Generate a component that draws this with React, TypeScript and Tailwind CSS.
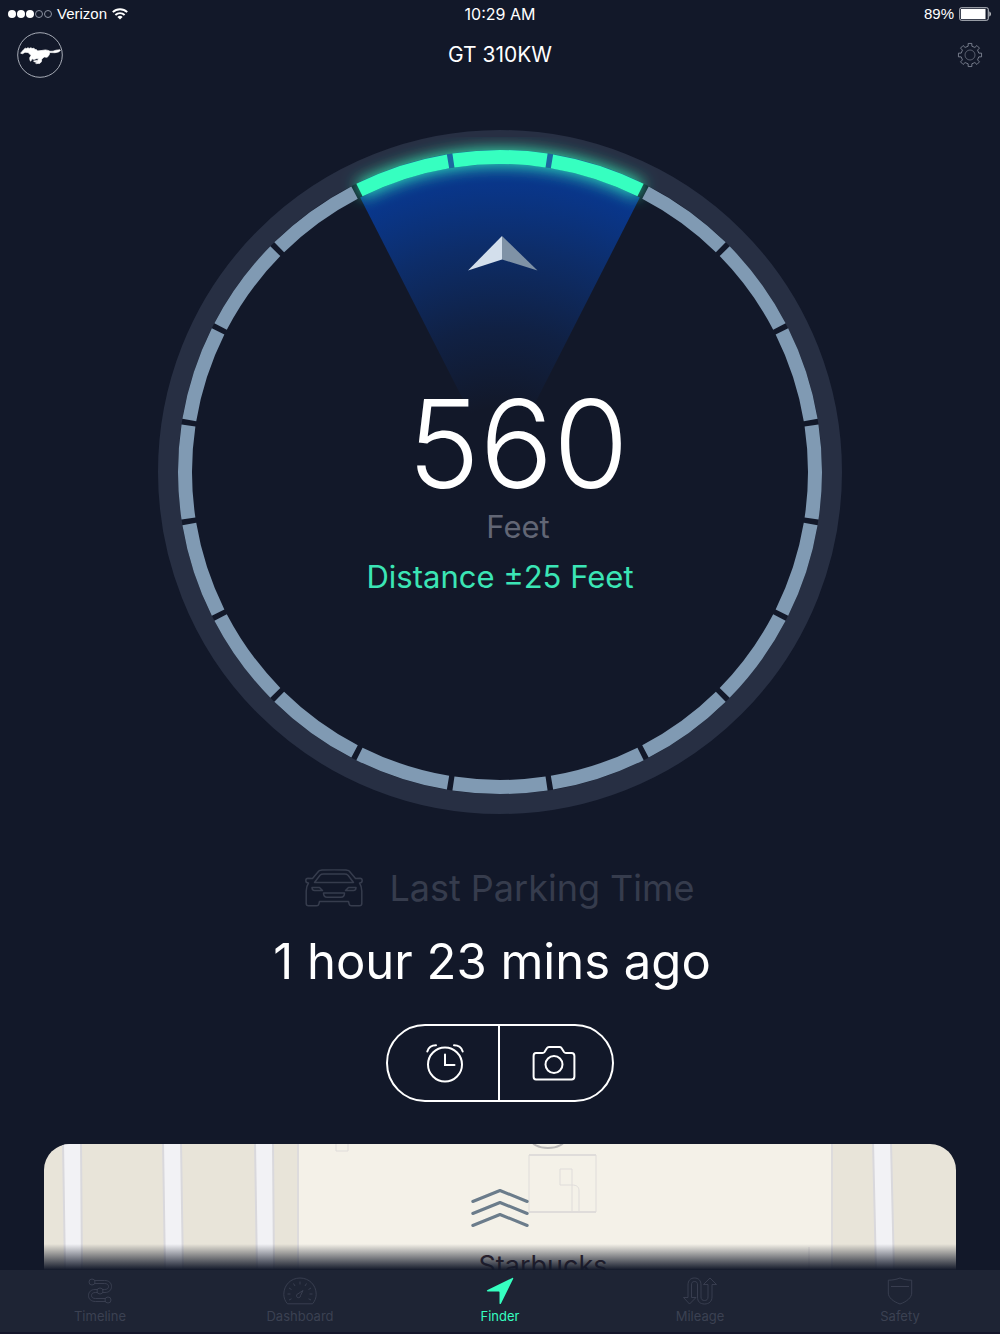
import { useState } from 'react';
import type { ReactNode } from 'react';

type IconProps = { className?: string };

const toPoint = (cx: number, cy: number, radius: number, degrees: number) => {
  const angle = (degrees * Math.PI) / 180;
  return {
    x: cx + radius * Math.sin(angle),
    y: cy - radius * Math.cos(angle),
  };
};

const SEGMENT_COUNT = 20;
const SEGMENT_ANGLE = 360 / SEGMENT_COUNT;
const CENTER = 342;
const SEGMENT_RADIUS = 315;

const arcPath = (from: number, to: number, radius: number) => {
  const start = toPoint(CENTER, CENTER, radius, from);
  const end = toPoint(CENTER, CENTER, radius, to);
  return `M${start.x} ${start.y} A${radius} ${radius} 0 0 1 ${end.x} ${end.y}`;
};

const segmentPath = (index: number) => {
  const middle = index * SEGMENT_ANGLE;
  return arcPath(middle - 8.5, middle + 8.5, SEGMENT_RADIUS);
};

const gearPath = () => {
  const points: string[] = [];
  for (let tooth = 0; tooth < 8; tooth++) {
    const middle = tooth * 45;
    [
      [9, middle - 12],
      [11.7, middle - 9],
      [11.7, middle + 9],
      [9, middle + 12],
    ].forEach(([radius, degrees]) => {
      const { x, y } = toPoint(13, 13, radius, degrees);
      points.push(`${x} ${y}`);
    });
  }
  return `M${points.join('L')}Z`;
};

const WifiIcon = () => (
  <svg viewBox="0 0 16 12" className="w-4 h-3" fill="none" stroke="white" strokeWidth="1.9">
    <path d="M0.8 4.2a10.2 10.2 0 0 1 14.4 0" />
    <path d="M3.4 7a6.5 6.5 0 0 1 9.2 0" />
    <path d="M8 11.6L5.4 9a3.7 3.7 0 0 1 5.2 0z" fill="white" stroke="none" />
  </svg>
);

const BatteryIcon = () => (
  <svg viewBox="0 0 33 14" className="w-[33px] h-[14px]">
    <rect x="0.75" y="0.75" width="28.5" height="12.5" rx="1.5" fill="none" stroke="#c4c7ce" />
    <rect x="2" y="2" width="24.5" height="10" fill="white" />
    <path d="M30.5 4.5c1.6.4 1.6 4.600 0 5z" fill="white" />
  </svg>
);

const HorseLogo = () => (
  <svg viewBox="0 0 46 46" className="w-[46px] h-[46px]">
    <circle cx="23" cy="23" r="22.3" fill="none" stroke="#b9bdc7" strokeWidth="0.9" />
    <path
      fill="white"
      stroke="white"
      strokeWidth="0.7"
      strokeLinejoin="round"
      d="M3.600 21.200L6.500 17.800 8.200 16.200 9.500 16.600 11 15.700 12.200 16.500 14 15.700 15 16.600 17 16.200 18 17.600 19.600 17.700 20.500 18.900 24 18.600 28.500 17.900 31 18.400 33 19.300 36 19.200 39 18.200 43 17.800 43.400 18.500 41.500 19.900 38 20.700 35 20.600 32.600 20.500 32.300 22.500 31 24.600 29.800 25.300 27.300 25 25.800 26 24.600 27.500 24.500 29.500 23 31.300 19.300 31.600 18.500 31 20.800 29.800 17.500 30 16.500 28.900 20.500 28.400 21.500 26.800 20 26.500 17 27.500 15 26.800 13.800 29.200 13 28.600 12.700 25.800 14 23.600 13 22.200 11 20.500 8 20.300 5.500 21.700z"
    />
  </svg>
);

const GearIcon = () => (
  <svg viewBox="0 0 26 26" className="w-[26px] h-[26px]" fill="none" stroke="#8d93a2" strokeWidth="0.8">
    <path d={gearPath()} strokeLinejoin="round" />
    <circle cx="13" cy="13" r="5" strokeOpacity="0.7" />
  </svg>
);

const CarIcon = () => (
  <svg viewBox="0 0 58 38" className="w-[58px] h-[38px]" fill="none" stroke="currentColor" strokeWidth="1.5" strokeLinejoin="round">
    <path d="M7.500 9.500L12.500 3.500C13.500 1.800 15 1.200 17 1.100 25 0.800 33 0.800 41 1.100 43 1.200 44.500 1.800 45.500 3.500L50.500 9.500 55 9.200C56.500 9.200 57.200 10 57.200 11.500 57.200 13 56.500 14 54.500 14 56.500 17 56.800 19 56.800 22V34.500C56.800 36 56 36.800 54.500 36.800H46.500C45 36.800 44.200 36 44 34.500L43.500 32.500H14.500L14 34.500C13.800 36 13 36.800 11.500 36.800H3.500C2 36.800 1.200 36 1.200 34.500V22C1.200 19 1.500 17 3.500 14 1.500 14 0.800 13 0.800 11.500 0.800 10 1.500 9.200 3 9.200z" />
    <path d="M9.500 13.500L15 6.200C16 5.200 17 5 18.500 5H39.500C41 5 42 5.200 43 6.200L48.500 13.500z" />
    <path d="M7 18.500H14.500L17.500 21.500H9.500C8 21.500 7 20.500 7 18.500zM51 18.500H43.500L40.500 21.500H48.500C50 21.500 51 20.500 51 18.500zM18.500 24H39.500C39.500 27 38.500 28.200 36 28.200H22C19.500 28.200 18.500 27 18.500 24z" />
  </svg>
);

const AlarmIcon = () => (
  <svg viewBox="0 0 40 40" className="w-10 h-10" fill="none" stroke="white" strokeWidth="2" strokeLinecap="round">
    <circle cx="20" cy="21.500" r="17" />
    <path d="M20 11.500V22H29.500" />
    <path d="M2.300 8.500C3.500 4.500 6.500 2.300 11 2.300M37.700 8.500C36.500 4.500 33.500 2.300 29 2.300" />
  </svg>
);

const CameraIcon = () => (
  <svg viewBox="0 0 44 36" className="w-11 h-9" fill="none" stroke="white" strokeWidth="2" strokeLinejoin="round">
    <path d="M4 8H10.500C11.500 8 12 7.700 12.500 7L15 3C15.400 2.300 16 2 17 2H27.500C28.500 2 29 2.300 29.500 3L32 7C32.500 7.700 33 8 34 8H39.500C41.500 8 42.400 9 42.400 11V31.500C42.400 33.500 41.500 34.400 39.500 34.400H4C2 34.400 1.600 33.500 1.600 31.500V11C1.600 9 2 8 4 8z" />
    <circle cx="22" cy="19.500" r="8.500" />
  </svg>
);

const TimelineIcon = ({ className }: IconProps) => (
  <svg viewBox="0 0 26 28" className={className} fill="none" stroke="currentColor" strokeWidth="0.9">
    <circle cx="5" cy="5" r="3" />
    <circle cx="13" cy="14" r="3" />
    <circle cx="21" cy="23" r="3" />
    <path d="M8 3.500H17.500C22 3.500 24.500 6 24.500 9.500S22 15.500 18 15.500H16M8 6.500H17.500C20 6.500 21.500 7.500 21.500 9.500S20 12.500 17.500 12.500H16" />
    <path d="M18 24.500H8.500C4 24.500 1.500 22 1.500 18.500S4 12.500 8 12.500H10M18 21.500H8.500C6 21.500 4.500 20.500 4.500 18.500S6 15.500 8.500 15.500H10" />
  </svg>
);

const DashboardIcon = ({ className }: IconProps) => (
  <svg viewBox="0 0 34 28" className={className} fill="none" stroke="currentColor" strokeWidth="0.9">
    <path d="M4.500 26.800C2 24 0.800 20.800 0.800 17.200 0.800 8 8 1 17 1S33.200 8 33.200 17.200C33.200 20.800 32 24 29.500 26.800z" />
    <path d="M17 4.500V7.500M10.500 6.500L12 9M23.500 6.500L22 9M6 11L8.500 12.500M28 11L25.500 12.500M4.500 17H7.500M29.500 17H26.500M6 23L8.500 21.800M28 23L25.500 21.800" />
    <path d="M20 13.500L17.500 18.500A2 2 0 1 1 15 16.800z" />
  </svg>
);

const FinderIcon = ({ className }: IconProps) => (
  <svg viewBox="0 0 28 28" className={className} fill="currentColor">
    <path d="M26.300 0.900C27 0.600 27.500 1.100 27.200 1.800L15 26.500C14.500 27.400 13.500 27.200 13.500 26.200V15.500C13.500 14.800 13.200 14.500 12.500 14.500H1.800C0.600 14.500 0.500 13.500 1.500 13z" />
  </svg>
);

const MileageIcon = ({ className }: IconProps) => (
  <svg viewBox="0 0 34 28" className={className} fill="none" stroke="currentColor" strokeWidth="0.9" strokeLinejoin="round">
    <path d="M5 20.500V8C5 3.500 7.500 1 11.500 1S18 3.500 18 8V20C18 22.500 19.500 23.500 21.500 23.500S25 22.500 25 20V7.500H20.500L27 1 33.500 7.500H29V20C29 24.500 26 27 21.500 27S14.500 24.500 14.500 20V8C14.500 5.500 13.500 4.500 11.500 4.500S8.500 5.500 8.500 8V20.500H13L6.500 27 0.500 20.500z" />
  </svg>
);

const SafetyIcon = ({ className }: IconProps) => (
  <svg viewBox="0 0 26 28" className={className} fill="none" stroke="currentColor" strokeWidth="0.9" strokeLinejoin="round">
    <path d="M13 1C17 2.600 21 3.200 24.700 3.200V16C24.700 20.500 20 24.500 13 27 6 24.500 1.300 20.500 1.300 16V3.200C5 3.200 9 2.600 13 1z" />
    <path d="M4 9.500H22" />
  </svg>
);

const StatusBar = () => (
  <div className="grid grid-cols-3 items-center h-7 px-2 font-['Liberation_Sans'] text-[15px]">
    <div className="flex items-center gap-[5px]">
      <div className="flex gap-px">
        {[true, true, true, false, false].map((filled, index) => (
          <span
            key={index}
            className={
              filled
                ? 'w-2 h-2 rounded-full bg-white'
                : 'w-2 h-2 rounded-full border border-[#8d93a2]'
            }
          />
        ))}
      </div>
      <span>Verizon</span>
      <WifiIcon />
    </div>
    <span className="text-center font-['Inter'] text-base">10:29 AM</span>
    <div className="flex items-center justify-end gap-[5px]">
      <span>89%</span>
      <BatteryIcon />
    </div>
  </div>
);

const Header = () => (
  <header className="flex items-center justify-between px-[17px] h-[54px]">
    <button type="button" aria-label="Vehicle">
      <HorseLogo />
    </button>
    <h1 className="text-[21px]">GT 310KW</h1>
    <button type="button" aria-label="Settings" className="w-[46px] flex justify-end">
      <GearIcon />
    </button>
  </header>
);

const Compass = () => {
  const left = toPoint(CENTER, CENTER, 308, -27);
  const right = toPoint(CENTER, CENTER, 308, 27);
  const active = [-1, 0, 1];
  return (
    <svg viewBox="0 0 684 684" className="w-full">
      <defs>
        <radialGradient id="beam" gradientUnits="userSpaceOnUse" cx={CENTER} cy={CENTER} r="322">
          <stop offset="0.2" stopColor="#0a3a91" stopOpacity="0" />
          <stop offset="0.45" stopColor="#0a3a91" stopOpacity="0.26" />
          <stop offset="0.7" stopColor="#0a3a91" stopOpacity="0.62" />
          <stop offset="0.9" stopColor="#09368a" />
          <stop offset="1" stopColor="#0d4a96" />
        </radialGradient>
        <filter id="glow" x="-20%" y="-60%" width="140%" height="220%">
          <feGaussianBlur stdDeviation="8" />
        </filter>
      </defs>
      <circle cx={CENTER} cy={CENTER} r="332" fill="none" stroke="#272f43" strokeWidth="20" />
      <path
        d={`M${CENTER} ${CENTER}L${left.x} ${left.y}A308 308 0 0 1 ${right.x} ${right.y}Z`}
        fill="url(#beam)"
      />
      <path d={arcPath(-26.5, 26.5, SEGMENT_RADIUS)} fill="none" stroke="#36ffc0" strokeWidth="14" filter="url(#glow)" />
      <path d={arcPath(-26, 26, SEGMENT_RADIUS)} fill="none" stroke="#1c68a0" strokeWidth="14" />
      {Array.from({ length: SEGMENT_COUNT }, (_, index) => index)
        .filter((index) => index > 1 && index < SEGMENT_COUNT - 1)
        .map((index) => (
          <path key={index} d={segmentPath(index)} fill="none" stroke="#809ab3" strokeWidth="14" />
        ))}
      {active.map((index) => (
        <path key={index} d={segmentPath(index)} fill="none" stroke="#36ffc0" strokeWidth="14" />
      ))}
      <path d="M344 106L310 140.500 344 129.500z" fill="#d3dfec" />
      <path d="M344 106L379.500 140.500 344 129.500z" fill="#7f92a6" />
    </svg>
  );
};

const Distance = () => (
  <section className="grid w-full max-w-[684px] mx-auto mt-12">
    <div className="col-start-1 row-start-1">
      <Compass />
    </div>
    <div className="col-start-1 row-start-1 self-center flex flex-col items-center pt-11">
      <div className="flex flex-col items-center pl-9">
        <span className="font-light text-[122px] leading-[128px]">560</span>
        <span className="text-[31px] leading-[38px] text-[#626675]">Feet</span>
      </div>
      <p className="text-[31px] leading-[62px] text-[#3be5b5]">Distance ±25 Feet</p>
    </div>
  </section>
);

const Parking = () => (
  <section className="flex flex-col items-center mt-12">
    <div className="flex items-center gap-[26px] text-[#363c4d]">
      <CarIcon />
      <h2 className="text-[36px] leading-[52px]">Last Parking Time</h2>
    </div>
    <p className="pr-4 mt-2 text-[49px] leading-[80px]">1 hour 23 mins ago</p>
    <div className="flex mt-[22px] border-2 border-white rounded-full divide-x-2 divide-white">
      <button type="button" aria-label="Set reminder" className="grid place-items-center w-28 h-[74px] pl-1">
        <AlarmIcon />
      </button>
      <button type="button" aria-label="Take photo" className="grid place-items-center w-28 h-[74px] pr-1">
        <CameraIcon />
      </button>
    </div>
  </section>
);

const MapDrawing = () => (
  <svg viewBox="0 0 912 126" preserveAspectRatio="xMidYMin slice" className="absolute inset-0 w-full h-full">
    <rect width="912" height="126" fill="#e8e4d9" />
    <g fill="#f2f2f5" stroke="#d9d8dc" strokeWidth="2">
      <path d="M19 -2L21 128H38L37 -2z" />
      <path d="M119 -2L121 128H139L137 -2z" />
      <path d="M211 -2L213 128H230L229 -2z" />
      <path d="M829 -2L832 128H850L847 -2z" />
    </g>
    <path d="M253 0H788V126H253z" fill="#f4f1e8" />
    <path d="M254 0V126M788 0V126" stroke="#dddbdc" strokeWidth="2" />
    <g fill="none" stroke="#dfdcda">
      <path d="M292 0V7H304V0M485 11H552V68H485zM516 25H528V41H516zM528 41V68M528 41C533 41 535 43 535 47V68M765 103V126" />
      <path d="M485 11H552M485 68H552" strokeWidth="2" />
      <ellipse cx="504" cy="-5" rx="17" ry="9" stroke="#bbb9b8" strokeWidth="2" />
    </g>
  </svg>
);

const MapPreview = () => (
  <section className="relative flex-1 flex flex-col items-center min-h-[126px] mx-11 mt-[42px] rounded-t-[26px] overflow-hidden">
    <MapDrawing />
    <button type="button" aria-label="Open map" className="relative mt-[44px]">
      <svg viewBox="0 0 58 40" className="w-[58px] h-10" fill="none" stroke="#6b7c8b" strokeWidth="3" strokeLinecap="round" strokeLinejoin="round">
        <path d="M1.800 13.500L29 2.500 56.200 13.500M1.800 25.500L29 14.500 56.200 25.500M1.800 37.500L29 26.500 56.200 37.500" />
      </svg>
    </button>
    <div className="relative h-0 pl-[86px]">
      <p className="mt-[22px] text-[27px] leading-8 text-[#3a2730]">Starbucks</p>
    </div>
    <div className="absolute inset-x-0 bottom-0 h-[26px] bg-linear-to-b from-[#121829]/0 to-[#121829]" />
  </section>
);

const tabs: { name: string; icon: ReactNode }[] = [
  { name: 'Timeline', icon: <TimelineIcon className="w-[26px] h-7" /> },
  { name: 'Dashboard', icon: <DashboardIcon className="w-[34px] h-7" /> },
  { name: 'Finder', icon: <FinderIcon className="w-7 h-7" /> },
  { name: 'Mileage', icon: <MileageIcon className="w-[34px] h-7" /> },
  { name: 'Safety', icon: <SafetyIcon className="w-[26px] h-7" /> },
];

const TabBar = () => {
  const [current, setCurrent] = useState('Finder');
  return (
    <nav className="grid grid-cols-5 h-16 bg-[#1e2434] border-b-2 border-[#14152a]">
      {tabs.map(({ name, icon }) => (
        <button
          key={name}
          type="button"
          onClick={() => setCurrent(name)}
          className={
            name === current
              ? 'flex flex-col items-center pt-[7px] text-[#36ffc0]'
              : 'flex flex-col items-center pt-[7px] text-[#3b4152]'
          }
        >
          {icon}
          <span className="text-[13px] leading-[22px]">{name}</span>
        </button>
      ))}
    </nav>
  );
};

export default function App() {
  return (
    <main className="flex flex-col min-h-screen bg-[#121829] text-white font-['Inter',sans-serif]">
      <StatusBar />
      <Header />
      <Distance />
      <Parking />
      <MapPreview />
      <TabBar />
    </main>
  );
}
